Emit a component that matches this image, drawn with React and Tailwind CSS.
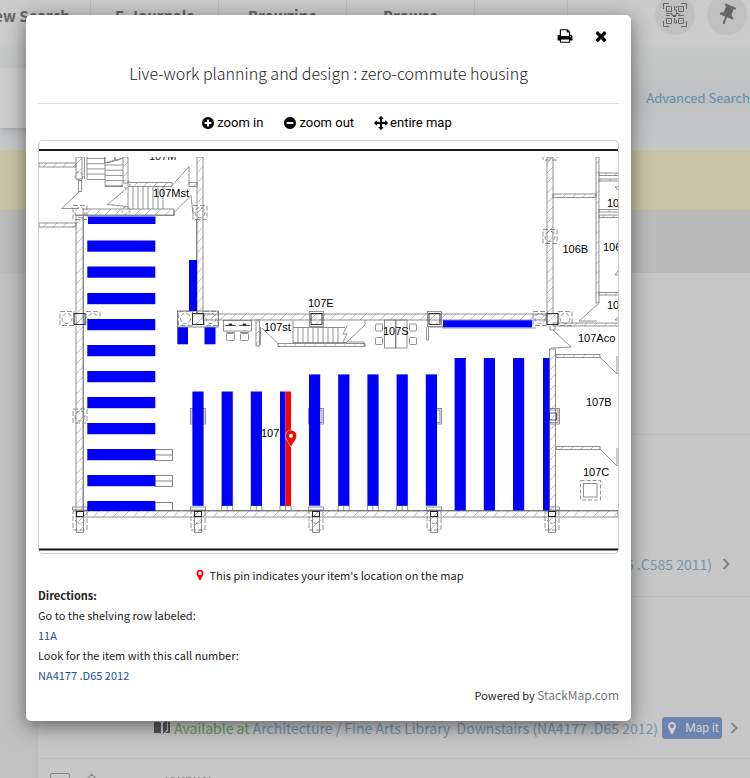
import React from "react";

const ICONS = {
  print:
    "M448 1536h896v-256h-896v256zm0-640h896v-384h-160q-40 0-68-28t-28-68v-160h-640v640zm1152 64q0-26-19-45t-45-19-45 19-19 45 19 45 45 19 45-19 19-45zm128 0v416q0 13-9.5 22.5t-22.5 9.5h-224v160q0 40-28 68t-68 28h-960q-40 0-68-28t-28-68v-160h-224q-13 0-22.5-9.5t-9.5-22.5v-416q0-79 56.5-135.5t135.5-56.5h64v-544q0-40 28-68t68-28h672q40 0 88 20t76 48l152 152q28 28 48 76t20 88v256h64q79 0 135.5 56.5t56.5 135.5z",
  close:
    "M1490 1322q0 40-28 68l-136 136q-28 28-68 28t-68-28l-294-294-294 294q-28 28-68 28t-68-28l-136-136q-28-28-28-68t28-68l294-294-294-294q-28-28-28-68t28-68l136-136q28-28 68-28t68 28l294 294 294-294q28-28 68-28t68 28l136 136q28 28 28 68t-28 68l-294 294 294 294q28 28 28 68z",
  plus: "M1344 960v-128q0-26-19-45t-45-19h-256v-256q0-26-19-45t-45-19h-128q-26 0-45 19t-19 45v256h-256q-26 0-45 19t-19 45v128q0 26 19 45t45 19h256v256q0 26 19 45t45 19h128q26 0 45-19t19-45v-256h256q26 0 45-19t19-45zm320-64q0 209-103 385.5t-279.5 279.5-385.5 103-385.5-103-279.5-279.5-103-385.5 103-385.5 279.5-279.5 385.5-103 385.5 103 279.5 279.5 103 385.5z",
  minus:
    "M1344 960v-128q0-26-19-45t-45-19h-768q-26 0-45 19t-19 45v128q0 26 19 45t45 19h768q26 0 45-19t19-45zm320-64q0 209-103 385.5t-279.5 279.5-385.5 103-385.5-103-279.5-279.5-103-385.5 103-385.5 279.5-279.5 385.5-103 385.5 103 279.5 279.5 103 385.5z",
  move: "M1792 896q0 26-19 45l-256 256q-19 19-45 19t-45-19-19-45v-128h-384v384h128q26 0 45 19t19 45-19 45l-256 256q-19 19-45 19t-45-19l-256-256q-19-19-19-45t19-45 45-19h128v-384h-384v128q0 26-19 45t-45 19-45-19l-256-256q-19-19-19-45t19-45l256-256q19-19 45-19t45 19 19 45v128h384v-384h-128q-26 0-45-19t-19-45 19-45l256-256q19-19 45-19t45 19l256 256q19 19 19 45t-19 45-45 19h-128v384h384v-128q0-26 19-45t45-19 45 19l256 256q19 19 19 45z",
  marker:
    "M1152 640q0-106-75-181t-181-75-181 75-75 181 75 181 181 75 181-75 75-181zm256 0q0 109-33 179l-364 774q-16 33-47.5 52t-67.5 19-67.5-19-46.5-52l-365-774q-33-70-33-179 0-212 150-362t362-150 362 150 150 362z",
};

function Icon({ name, className }) {
  return (
    <svg viewBox="0 0 1792 1792" fill="currentColor" aria-hidden="true" className={className}>
      <path d={ICONS[name]} />
    </svg>
  );
}

/* ---------- floor plan ---------- */

// Walls, as x, y, width, height.
const WALLS = [
  [39, 163, 37, 4], [39, 223, 37, 4], [76, 157, 6, 22], [76, 215, 7, 296],
  [123, 157, 5, 26], [128, 182.5, 44, 4], [189, 182.5, 8, 4], [197, 157, 6, 157],
  [83, 209, 91, 6], [203, 314, 343, 6], [76, 511, 542, 6],
  [547, 157, 6, 157], [549.5, 349, 6, 162], [553, 194, 43, 3.5],
  [596, 157, 3, 146], [599, 173, 20, 2.5], [599, 179, 20, 2], [599, 209.5, 20, 2.5], [599, 215, 20, 2.5],
  [599, 292.5, 20, 2.5], [553, 323, 66, 3], [556, 354.5, 44, 3], [556, 446.5, 44, 3],
  [256, 320, 3.5, 26], [278, 343.5, 87, 3],
];

const SHELVES = [
  [88, 216.5, 67.5, 7.5],
  ...[240.5, 266.5, 293, 319, 345, 371, 397, 423, 449, 475].map((y) => [87.3, y, 68, 11.2]),
  [87.3, 501, 68, 10],
  [189, 260, 8, 51], [177.3, 327.3, 10.7, 17], [204.5, 327.3, 11, 17], [443, 320.3, 89, 7],
  ...[192.4, 221.6, 250.8].map((x) => [x, 391.5, 11.2, 114.3]),
  [280, 391.5, 5.5, 114.3],
  ...[309, 338.2, 367.4, 396.6, 425.8].map((x) => [x, 374.4, 11.2, 131.3]),
  ...[454.6, 483.8, 513].map((x) => [x, 358, 11.2, 152.4]),
  [543, 358, 6.5, 152.4],
];

// Dashed column footings, by centre.
const FOOTINGS = [
  [80, 212.5], [200, 212.5], [67, 318.5], [93, 318.5], [540, 318.5], [565, 318.5],
  [80, 416], [550, 236.5], [550, 153], [185.5, 318.5], [211, 318.5],
];

const ROOMS = [
  ["107Mst", 153, 197], ["107E", 308, 307], ["107st", 264, 331], ["107S", 383, 335],
  ["106B", 562.5, 253], ["106", 603, 251], ["10", 607, 207], ["10", 607, 309],
  ["107Aco", 578, 342], ["107B", 586, 406], ["107C", 583, 475.5], ["107", 261, 437],
];

function range(from, to, step) {
  const out = [];
  for (let v = from; v <= to; v += step) out.push(v);
  return out;
}

function FloorPlan() {
  return (
    <svg viewBox="39 141 579 412" className="block h-auto w-full" role="img" aria-label="Library floor map">
      <defs>
        <pattern id="hatch" width="10" height="10" patternUnits="userSpaceOnUse">
          <path d="M0 10L10 0" stroke="#a4a4a4" strokeWidth="0.7" />
        </pattern>
        <clipPath id="plan">
          <rect x="39" y="157" width="579" height="391" />
        </clipPath>
      </defs>
      <rect x="39" y="149" width="579" height="2" fill="#1c1a1c" />
      <rect x="39" y="548.5" width="579" height="2" fill="#111" />
      <g clipPath="url(#plan)" fill="none" stroke="#777" strokeWidth="0.8">
        {WALLS.map(([x, y, w, h], i) => (
          <rect key={i} x={x} y={y} width={w} height={h} fill="url(#hatch)" />
        ))}
        {/* upper-left stairs */}
        <path d="M84.500 157v22M87 157v22.500h18M105 157v29.500h18M104.500 157v6l18-5" />
        {range(158.5, 179, 5.2).map((y) => <path key={y} d={`M87 ${y}h18`} />)}
        {range(165, 186, 5.2).map((y) => <path key={y} d={`M105 ${y}h18`} />)}
        <path d="M107 163l7-2 1-4 1 4 7-3" />
        {range(128, 163, 5).map((x) => <path key={x} d={`M${x} 187v22`} />)}
        <circle cx="79" cy="176" r="4" strokeDasharray="3 2" />
        <circle cx="126" cy="184" r="4" strokeDasharray="3 2" />
        <circle cx="126" cy="211" r="4" strokeDasharray="3 2" />
        <rect x="78.500" y="180.500" width="3" height="11" />
        <path d="M172 185.500l17-19v18M174 212.500l17-17 2 19M79 192l-17.500 16.500h17M127 188l-19.500 16.500 20 2M174 210v6" />
        <path d="M83.500 216v294M196.500 220v94M76 215.500h98" />
        {/* reading desks and stairs below 107E */}
        <rect x="177.500" y="311" width="41" height="16" stroke="#666" />
        <rect x="223.500" y="320.500" width="28" height="10.500" />
        <path d="M225 325.500h11M239 325.500h11" stroke="#333" />
        <path d="M229 325.500v-1.500h3v1.500zM243 325.500v-1.500h3v1.500z" fill="#333" stroke="#333" />
        <rect x="226.500" y="333.500" width="8" height="7" rx="1" />
        <rect x="240.500" y="333.500" width="8" height="7" rx="1" />
        <path d="M226 332.500h9M240 332.500h9M260.500 327v18M262 328l16 15.500M365 320v5l-18 17h17v4" />
        <path d="M293 320v23.500M293 327.500h52M293 342.500h54M347 326l-4 8h4l-4 8" />
        {range(298, 342, 5).map((x) => <path key={x} d={`M${x} 327.5v15`} />)}
        <rect x="384.500" y="320" width="11" height="28" />
        <rect x="396" y="320" width="11" height="28" />
        {[375.5, 409.5].map((x) =>
          [324, 337.5].map((y) => <rect key={`${x}-${y}`} x={x} y={y} width="7" height="7" rx="1" />)
        )}
        <path d="M426.500 327v13h2v-13M442 328h94M430 327h14v-7" />
        {/* doors on the right */}
        <path d="M598 304l-19 17h18M550 326v4h5v-4M553 330l18 17-20 1M600 357l17 17v-18M600 449l17 17v-18" />
        <path d="M618 187l-3 0 3 3M618 271l-3 4h3M618 317l-3 3h3" />
        <rect x="580.500" y="480.500" width="20" height="19.500" strokeDasharray="4 2" />
        <rect x="583.500" y="483.500" width="13.500" height="13.500" />
        {FOOTINGS.map(([x, y]) => (
          <g key={`${x}-${y}`}>
            <rect x={x - 7} y={y - 7} width="14" height="14" strokeDasharray="5 2" />
            <circle cx={x} cy={y} r="5" strokeDasharray="4 2" />
          </g>
        ))}
        {/* square columns along the middle wall */}
        {[79.5, 198, 316.5, 434.5, 552.5].map((x) => (
          <rect key={x} x={x - 5.5} y="313.500" width="11" height="11" fill="url(#hatch)" stroke="#333" strokeWidth="1" />
        ))}
        {[316.5, 434.5].map((x) => <rect key={x} x={x - 7} y="311.500" width="14" height="15" />)}
        {/* columns between the stacks */}
        {[198, 316, 434, 552].map((x) => (
          <g key={x}>
            <rect x={x - 7.5} y="408.500" width="15" height="15.500" />
            <rect x={x - 6} y="410" width="12" height="12.500" />
          </g>
        ))}
        <rect x="549.500" y="413" width="7" height="7" stroke="#333" />
        {/* footings along the bottom wall */}
        {[80, 198, 316, 434, 552].map((x) => (
          <g key={x}>
            <rect x={x - 7.5} y="507" width="15" height="3" />
            <rect x={x - 7} y="511" width="14" height="19" strokeDasharray="5 2" />
            <rect x={x - 3.5} y="511" width="7" height="21.500" fill="url(#hatch)" />
            <path d={`M${x - 5} 520q5 7 10 0`} strokeDasharray="3 1" />
            <rect x={x - 3.5} y="511.500" width="7" height="5" stroke="#222" strokeWidth="1" />
          </g>
        ))}
        <path d="M83 510.500h466M556 510.500h62" stroke="#666" />
        {[221.6, 250.8, 280, 338.2, 367.4, 396.6].map((x) => (
          <path key={x} d={`M${x} 505.5h11v5h-11zM${x + 5.500} 505.5v5`} />
        ))}
        <path d="M155 449.500h17.500v11h-17.500zM155 455h17.500M155 475.500h17.500v11h-17.500zM155 481h17.500M155 502.500h17.500v8h-17.500z" stroke="#666" />
        <text x="149" y="160" fontSize="11" fill="#111" stroke="none" className="font-['Liberation_Sans',sans-serif]">107M</text>
      </g>
      <g fill="#0000ff">
        {SHELVES.map(([x, y, w, h], i) => (
          <rect key={i} x={x} y={y} width={w} height={h} />
        ))}
      </g>
      <rect x="285.500" y="391.500" width="5.500" height="114.300" fill="#ff0000" />
      <g fill="#000" fontSize="11" className="font-['Liberation_Sans',sans-serif]">
        {ROOMS.map(([label, x, y], i) => (
          <text key={i} x={x} y={y}>{label}</text>
        ))}
      </g>
      <path d="M291 447.500c-1-4-5.700-7-5.700-11.800a5.700 5.700 0 0 1 11.400 0c0 4.800-4.700 7.800-5.700 11.800z" fill="#e01010" stroke="#fff" strokeWidth="0.500" />
      <circle cx="291" cy="435.800" r="2" fill="#fff" />
    </svg>
  );
}

/* ---------- page behind the dialog ---------- */

function QrIcon() {
  return (
    <svg viewBox="0 0 24 24" className="size-6" fill="none" stroke="currentColor" aria-hidden="true">
      <path d="M.5 6V.5H6M18 .5h5.500V6M23.500 18v5.500H18M6 23.500H.5V18" />
      <path d="M3.500 3.500h5v5h-5zM15.500 3.500h5v5h-5zM3.500 15.500h5v5h-5zM15.500 15.500h5v5h-5z" />
      <path d="M5.500 6h1M17.500 6h1M5.500 18h1M17.500 18h1M11.500 3v4h2v3M3 10.500h6v2h4v-2h3v2h5M11.500 15v5h2v-3M3 12.500h4M15 12.500h3M10 13.500h3M13.500 3v2" />
    </svg>
  );
}

function Chevron() {
  return (
    <svg viewBox="0 0 8 12" className="h-3 w-2 shrink-0 text-[#858585]" fill="none" stroke="currentColor" strokeWidth="2" aria-hidden="true">
      <path d="M1.500 1l5 5-5 5" />
    </svg>
  );
}

function Background() {
  return (
    <div className="flex h-screen flex-col overflow-hidden bg-[#c0c0c0]">
      <header className="flex h-[46px] shrink-0 items-start justify-between bg-[#cbcbcb] text-[#666]">
        <nav className="-ml-[37px] flex h-full text-[15px] font-bold">
          {["New Search", "E-Journals", "Browzine", "Browse"].map((label) => (
            <a key={label} href="#" className="flex h-8 w-32 items-center justify-center border-r border-[#bdbdbd] leading-8">
              {label}
            </a>
          ))}
          <span className="h-8 w-[93px] border-r border-[#bdbdbd]" />
        </nav>
        <div className="-mt-[5px] flex gap-3 pr-[3px]">
          <button aria-label="Scan QR code" className="flex size-10 items-center justify-center rounded-full bg-[#c0c0c0]">
            <QrIcon />
          </button>
          <button aria-label="Saved items" className="flex size-10 items-center justify-center rounded-full bg-[#c0c0c0]">
            <svg viewBox="0 0 24 24" className="size-6 rotate-[22deg]" fill="currentColor" aria-hidden="true">
              <path d="M16 9V4h1c.6 0 1-.4 1-1s-.4-1-1-1H7c-.6 0-1 .4-1 1s.4 1 1 1h1v5c0 1.700-1.300 3-3 3v2h6v7l1 1 1-1v-7h6v-2c-1.700 0-3-1.300-3-3z" />
            </svg>
          </button>
        </div>
      </header>
      <section className="flex h-[104px] shrink-0 items-center justify-between gap-4 bg-linear-to-b from-[#c8c9c9] via-[#bec0c1] to-[#c7c8c9]">
        <div className="h-[60px] flex-1 bg-[#cdcdcd] shadow-md" />
        <a href="#" className="w-[118px] text-right text-[13px] leading-5 whitespace-nowrap text-[#5f8fb0]">Advanced Search</a>
      </section>
      <div className="h-[60px] shrink-0 bg-[#c9c4a3]" />
      <div className="h-[63px] shrink-0 bg-[#bbbbbb]" />
      <main className="ml-[37px] flex-1 border-l border-[#bcbcbc] bg-[#c7c7c7] text-sm leading-6 text-[#7594a9]">
        <div className="h-[162px] border-b border-[#bdbdbd]" />
        <div className="flex h-[162px] items-end justify-end gap-2.5 border-b border-[#bdbdbd] pr-5 pb-5">
          <a href="#">5 .C585 2011)</a>
          <span className="flex h-6 items-center"><Chevron /></span>
        </div>
        <div className="flex h-[162px] items-end justify-end border-b border-[#bdbdbd] pr-3 pb-[18px] whitespace-pre">
          <span className="flex h-6 items-center gap-1">
            <svg viewBox="0 0 16 14" className="h-[14px] w-4 text-[#555]" fill="currentColor" aria-hidden="true">
              <path d="M0 1h6l1 1v11l-1-1H0zM9 2l4-2v9l-4 4zM14 1h2v11h-5l3-2z" />
            </svg>
            <a href="#"><span className="text-[#6f9663]">Available at</span> Architecture / Fine Arts Library  Downstairs (NA4177 .D65 2012)</a>
            <button className="flex h-[22px] w-[60px] items-center justify-center gap-1.5 rounded-[3px] bg-[#6c84ad] font-['Roboto',sans-serif] text-xs text-[#d0d0d0]">
              <Icon name="marker" className="size-3.5" />
              Map it
            </button>
            <span className="ml-1"><Chevron /></span>
          </span>
        </div>
        <div className="flex items-start gap-3 pt-3.5 pl-3 text-[#888]">
          <span className="flex h-6 w-5 justify-center rounded-xs border border-[#858585] text-xs">1</span>
          <svg viewBox="0 0 14 14" className="size-3.5 rotate-45" fill="none" stroke="currentColor" aria-hidden="true">
            <path d="M4 1h6M5 1v5l-2 3h8l-2-3V1M7 9v5" />
          </svg>
          <span className="ml-[54px] text-[11px] leading-4 font-bold">JOURNAL</span>
        </div>
      </main>
    </div>
  );
}

/* ---------- dialog ---------- */

function MapTool({ icon, label }) {
  return (
    <button className="flex items-center gap-0.5">
      <Icon name={icon} className="size-3.5" />
      {label}
    </button>
  );
}

function MapDialog() {
  return (
    <div
      role="dialog"
      aria-labelledby="map-title"
      className="rounded-[5px] bg-white px-3 pb-4 text-[11px] leading-5 text-[#222] shadow-[0_5px_20px_rgba(0,0,0,0.5)]"
    >
      <div className="flex justify-end gap-5 pt-3 pr-2.5 text-black">
        <button aria-label="Print" className="flex h-[18px] w-4 items-center justify-center"><Icon name="print" className="size-4 shrink-0" /></button>
        <button aria-label="Close" className="flex h-[18px] w-4 items-center justify-center"><Icon name="close" className="size-4 shrink-0" /></button>
      </div>
      <h1 id="map-title" className="border-b border-[#ddd] pt-3.5 pb-4 text-center text-base leading-7 font-light text-[#222]">
        Live-work planning and design : zero-commute housing
      </h1>
      <div className="flex h-9 items-center justify-center gap-5 pt-0.5 pr-1 font-['Roboto',sans-serif] text-[13px] text-black">
        <MapTool icon="plus" label="zoom in" />
        <MapTool icon="minus" label="zoom out" />
        <MapTool icon="move" label="entire map" />
      </div>
      <div className="overflow-hidden rounded-[5px] border border-[#ccc]">
        <FloorPlan />
      </div>
      <p className="mt-[11px] flex items-center justify-center gap-1">
        <Icon name="marker" className="size-3 text-[#f00]" />
        This pin indicates your item's location on the map
      </p>
      <p className="font-bold">Directions:</p>
      <p>Go to the shelving row labeled:</p>
      <p className="text-[#1b4fa0]">11A</p>
      <p>Look for the item with this call number:</p>
      <p className="text-[#1b4fa0]">NA4177 .D65 2012</p>
      <p className="text-right">
        Powered by <a href="#" className="text-xs text-[#777]">StackMap.com</a>
      </p>
    </div>
  );
}

export default function App() {
  return (
    <div className="relative font-['Noto_Sans_CJK_SC',sans-serif]">
      <Background />
      <div className="absolute inset-x-0 top-0 pt-[15px] pr-[119px] pl-[26px]">
        <MapDialog />
      </div>
    </div>
  );
}
